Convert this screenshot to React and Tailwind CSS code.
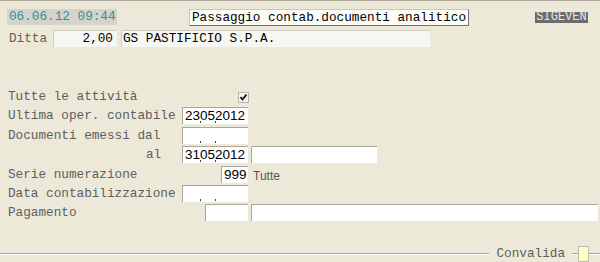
import React from "react";

const mono = { fontFamily: '"Liberation Mono", "Courier New", monospace' };
const sans = { fontFamily: '"Liberation Sans", Arial, sans-serif' };

function Field({ className = "", value = "", date = false, align = "left" }) {
  return (
    <div
      className={`relative h-[17px] bg-white border-t border-l border-[#a9a79c] ${className}`}
      style={sans}
    >
      <span
        className={`block px-[2px] text-[13.5px] leading-[16px] text-black ${align === "right" ? "text-right" : ""}`}
      >
        {value}
      </span>
      {date && (
        <>
          <span className="absolute left-[17px] bottom-[1px] h-[2px] w-[1px] bg-[#444]" />
          <span className="absolute left-[32px] bottom-[1px] h-[2px] w-[1px] bg-[#444]" />
        </>
      )}
    </div>
  );
}

function Label({ children, className = "" }) {
  return (
    <span className={`text-[12.7px] leading-[16px] text-[#5e5e5e] whitespace-pre ${className}`} style={mono}>
      {children}
    </span>
  );
}

export default function App() {
  return (
    <div className="relative flex h-[262px] w-[600px] flex-col overflow-hidden border-t border-[#aca899] bg-[#ece9d8]">
      {/* header */}
      <div className="mt-[8px] flex h-[17px] items-start">
        <div
          className="ml-[7px] h-[16px] w-[110px] bg-[#d6d3cd] pl-[2px] text-[12.7px] leading-[16px] text-[#2a9595]"
          style={mono}
        >
          06.06.12 09:44
        </div>
        <div
          className="ml-[72px] flex h-[17px] w-[280px] items-center justify-center border border-[#c9c7bd] border-b-[#707070] border-r-[#707070] bg-[#fdfdf8] text-[12.7px] leading-[15px] text-black"
          style={mono}
        >
          Passaggio contab.documenti analitico
        </div>
        <div
          className="ml-auto mr-[12px] mt-[3px] h-[11px] w-[53px] bg-[#6c6c6c] text-center text-[12px] leading-[11px] text-[#e4e4e4]"
          style={mono}
        >
          SIGEVEN
        </div>
      </div>

      <div className="mt-[4px] flex h-[17px] items-center">
        <Label className="ml-[9px] w-[44px]">Ditta</Label>
        <div
          className="h-[17px] w-[64px] border-t border-l border-[#cfcdc3] bg-[#f6f6f2] pr-[4px] text-right text-[12.7px] leading-[16px] text-black"
          style={mono}
        >
          2,00
        </div>
        <div
          className="ml-[4px] h-[17px] w-[309px] border-t border-l border-[#cfcdc3] bg-[#f6f6f2] pl-[1px] text-[12.7px] leading-[16px] text-black"
          style={mono}
        >
          GS PASTIFICIO S.P.A.
        </div>
      </div>

      {/* form */}
      <div className="mt-[43px] flex h-[14px] items-center">
        <Label className="ml-[8px] w-[230px]">Tutte le attività</Label>
        <div className="flex h-[11px] w-[11px] items-center justify-center border border-[#b9b7ac] bg-[#f4f4ee]">
          <svg width="9" height="9" viewBox="0 0 9 9">
            <path d="M1.5 4 L3.5 6.5 L7.5 1.5" stroke="#1a1a1a" strokeWidth="2" fill="none" />
          </svg>
        </div>
      </div>

      <div className="mt-[3px] flex h-[17px] items-center">
        <Label className="ml-[8px] w-[174px]">Ultima oper. contabile</Label>
        <Field className="w-[66px]" value="23052012" date />
      </div>

      <div className="mt-[3px] flex h-[17px] items-center">
        <Label className="ml-[8px] w-[174px]">Documenti emessi dal</Label>
        <Field className="w-[66px]" date />
      </div>

      <div className="mt-[2px] flex h-[17px] items-center">
        <Label className="ml-[8px] w-[174px] pl-[138px]">al</Label>
        <Field className="w-[66px]" value="31052012" date />
        <Field className="ml-[3px] w-[126px]" />
      </div>

      <div className="mt-[3px] flex h-[17px] items-center">
        <Label className="ml-[8px] w-[213px]">Serie numerazione</Label>
        <Field className="w-[27px]" value="999" align="right" />
        <span className="ml-[5px] mt-[2px] text-[12px] leading-[16px] text-[#555]" style={sans}>
          Tutte
        </span>
      </div>

      <div className="mt-[2px] flex h-[17px] items-center">
        <Label className="ml-[8px] w-[174px]">Data contabilizzazione</Label>
        <Field className="w-[66px]" date />
      </div>

      <div className="mt-[2px] flex h-[17px] items-center">
        <Label className="ml-[8px] w-[197px]">Pagamento</Label>
        <Field className="w-[43px]" />
        <Field className="ml-[3px] w-[347px]" />
      </div>

      {/* footer */}
      <div className="mt-auto flex h-[16px] items-center">
        <div className="h-[2px] flex-1 border-t border-b border-t-[#a8a697] border-b-white" />
        <span className="mx-[7px] text-[12.7px] leading-[16px] text-[#5e5e5e]" style={mono}>
          Convalida
        </span>
        <div className="h-[2px] w-[6px] border-t border-b border-t-[#a8a697] border-b-white" />
        <div className="h-[16px] w-[11px] border border-[#bdbbb0] bg-[#ffffc4]" />
        <div className="h-[2px] w-[11px] border-t border-b border-t-[#a8a697] border-b-white" />
      </div>
    </div>
  );
}
